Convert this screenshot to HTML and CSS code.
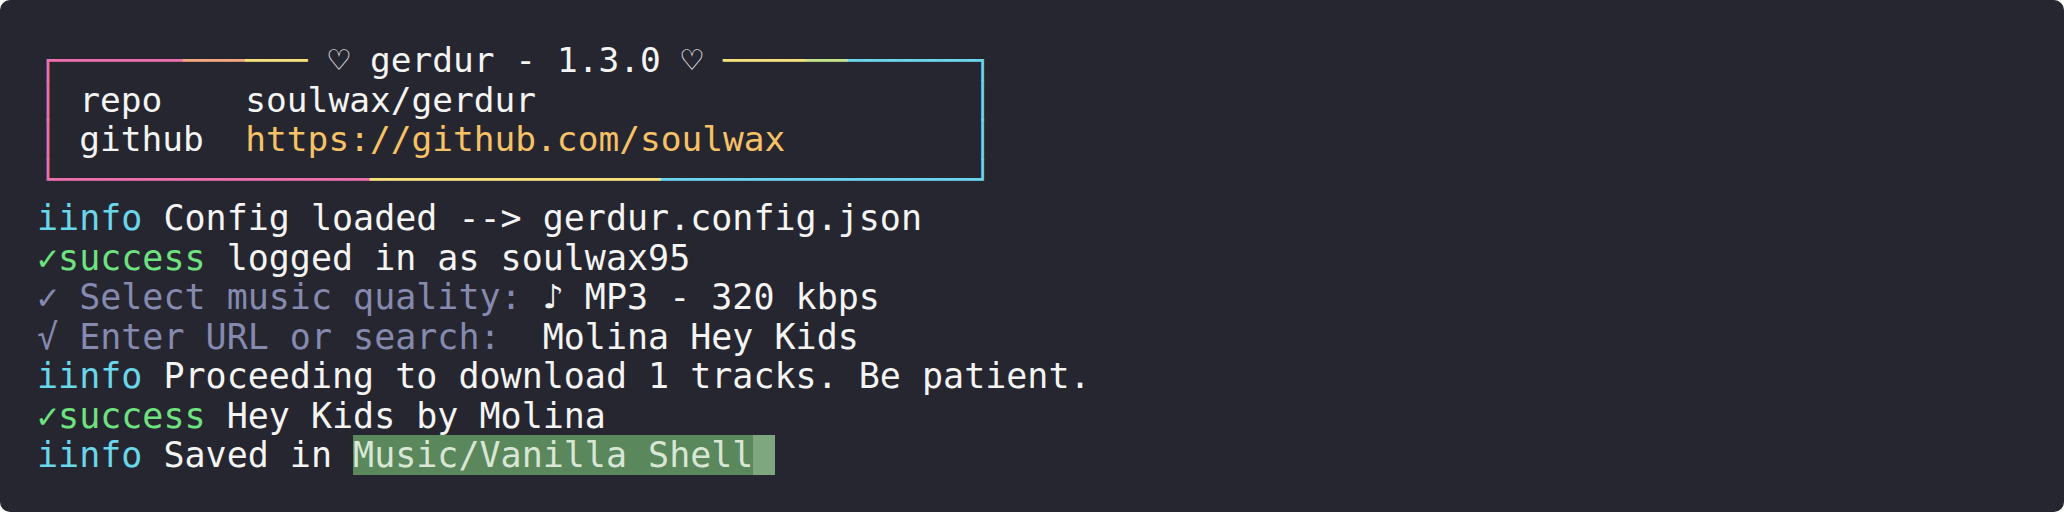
FILE: index.html
```html
<!DOCTYPE html>
<html lang="en">
<head>
<meta charset="utf-8">
<title>gerdur</title>
<link rel="stylesheet" href="styles.css">
</head>
<body>
<div class="term">
  <div class="box">
    <div class="row"><span class="pk">┌──────</span><span class="pc">───</span><span class="yl">───</span><span class="title"> <span class="g">♡</span> gerdur - 1.3.0 <span class="g">♡</span> </span><span class="yl">────</span><span class="gn">──</span><span class="cy">──────┐</span></div>
    <div class="row"><span class="pk">│</span> repo    soulwax/gerdur                     <span class="cy">│</span></div>
    <div class="row"><span class="pk">│</span> github  <span class="url">https://github.com/soulwax</span>         <span class="cy">│</span></div>
    <div class="row"><span class="pk">└───────────────</span><span class="yl">──────────────</span><span class="cy">───────────────┘</span></div>
  </div>
  <div class="log">
    <div class="row"><span class="info">iinfo</span> Config loaded --&gt; gerdur.config.json</div>
    <div class="row"><span class="ok"><span class="g tick">✓</span>success</span> logged in as soulwax95</div>
    <div class="row"><span class="q"><span class="g">✓</span> Select music quality:</span> <span class="g">♪</span> MP3 - 320 kbps</div>
    <div class="row"><span class="q"><span class="g">√</span> Enter URL or search:</span>  Molina Hey Kids</div>
    <div class="row"><span class="info">iinfo</span> Proceeding to download 1 tracks. Be patient.</div>
    <div class="row"><span class="ok"><span class="g tick">✓</span>success</span> Hey Kids by Molina</div>
    <div class="row"><span class="info">iinfo</span> Saved in <span class="hl">Music/Vanilla Shell</span><span class="cur"> </span></div>
  </div>
</div>
</body>
</html>
```

FILE: styles.css
```css
html, body {
  margin: 0;
  padding: 0;
  background: #ffffff;
}

.term {
  width: 2064px;
  height: 512px;
  box-sizing: border-box;
  background: #262631;
  border-radius: 10px;
  padding: 41px 0 0 37px;
  font-family: "DejaVu Sans Mono", "Liberation Mono", monospace;
  font-size: 35px;
  line-height: 39.5px;
  color: #f4f4f2;
  overflow: hidden;
}

.box {
  font-size: 34.5px;
  padding-left: 0.6px;
}

.row {
  white-space: pre;
  height: 39.5px;
  line-height: 39.5px;
}

.g {
  display: inline-block;
  width: 1ch;
  text-align: center;
}

.tick {
  font-weight: bold;
}

.pk { color: #ec6fae; }
.pc { color: #f1a780; }
.yl { color: #f4e17a; }
.gn { color: #c4e38a; }
.cy { color: #6cd5ee; }
.title { color: #f4f4f2; }
.url { color: #f6c265; }

.info { color: #6ad6ea; }
.ok { color: #6ee27f; }
.q { color: #858aae; }

.hl {
  background: #5b875c;
  color: #d8e6d5;
}

.cur {
  background: #7ea67f;
}
```
